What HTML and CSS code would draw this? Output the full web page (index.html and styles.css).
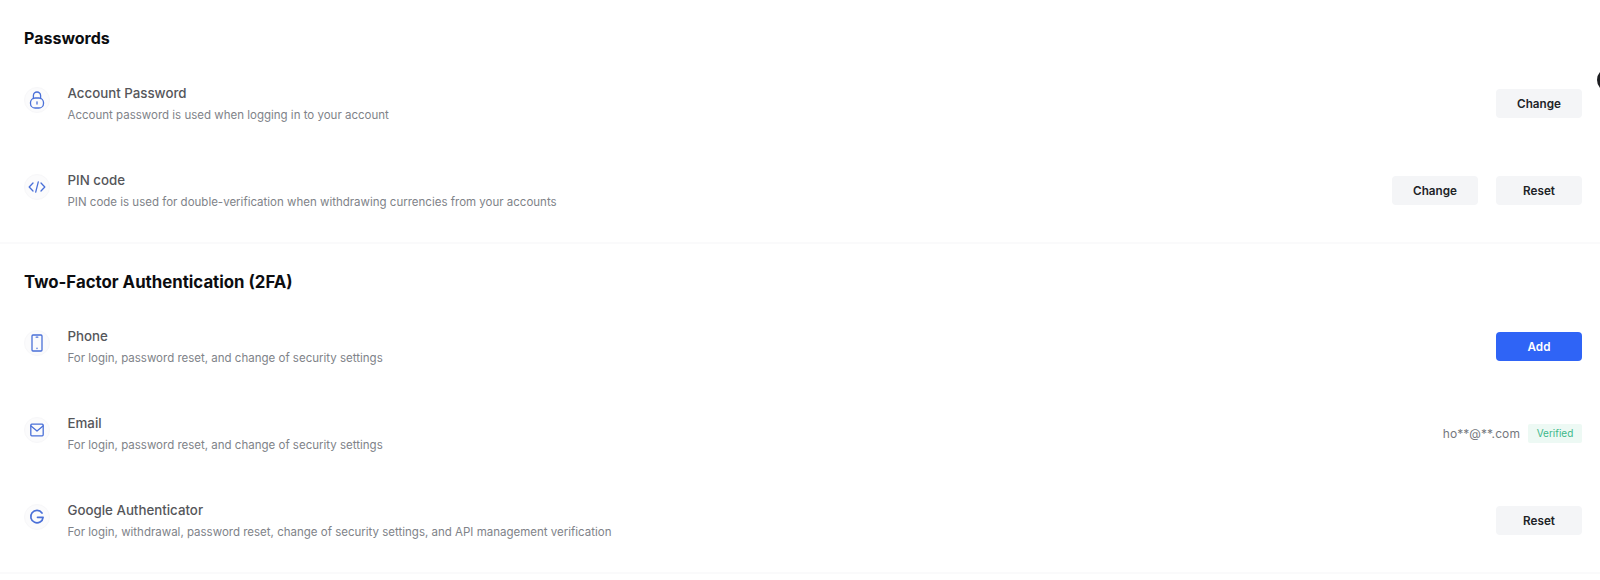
FILE: index.html
```html
<!DOCTYPE html>
<html>
<head>
    <title>Security Settings</title>
    <link rel="stylesheet" href="styles.css">
</head>
<body>
    <div class="edge-dot"></div>

    <div class="section">
        <h2>Passwords</h2>
        <div class="row">
            <div class="row-icon">
                <svg width="20" height="20" viewBox="0 0 20 20"><rect x="3.500" y="8" width="13" height="10" rx="4.600"/><path d="M6.400 8.600V5.600a3.600 3.600 0 0 1 7.200 0v3"/><path d="M10 11.800v2.200"/></svg>
            </div>
            <div class="row-text">
                <div class="row-title">Account Password</div>
                <div class="row-desc">Account password is used when logging in to your account</div>
            </div>
            <div class="row-actions">
                <button>Change</button>
            </div>
        </div>
        <div class="row">
            <div class="row-icon">
                <svg width="20" height="20" viewBox="0 0 20 20"><path d="M6 6 2.200 10 6 14"/><path d="M14 6l3.800 4-3.800 4"/><path d="M11.300 4.800 8.700 15.200"/></svg>
            </div>
            <div class="row-text">
                <div class="row-title">PIN code</div>
                <div class="row-desc">PIN code is used for double-verification when withdrawing currencies from your accounts</div>
            </div>
            <div class="row-actions">
                <button>Change</button>
                <button>Reset</button>
            </div>
        </div>
    </div>

    <div class="section">
        <h2>Two-Factor Authentication (2FA)</h2>
        <div class="row">
            <div class="row-icon">
                <svg width="20" height="20" viewBox="0 0 20 20"><rect x="5" y="2" width="10" height="16" rx="1"/><path d="M9.200 4.200h1.600"/><path d="M10 15.200v.4"/></svg>
            </div>
            <div class="row-text">
                <div class="row-title">Phone</div>
                <div class="row-desc">For login, password reset, and change of security settings</div>
            </div>
            <div class="row-actions">
                <button class="primary">Add</button>
            </div>
        </div>
        <div class="row">
            <div class="row-icon">
                <svg width="20" height="20" viewBox="0 0 20 20"><rect x="3.800" y="4.200" width="12.400" height="11.600" rx="1"/><path d="M4 6l6 5 6-5"/></svg>
            </div>
            <div class="row-text">
                <div class="row-title">Email</div>
                <div class="row-desc">For login, password reset, and change of security settings</div>
            </div>
            <div class="row-actions">
                <span class="masked">ho**@**.com</span>
                <span class="badge">Verified</span>
            </div>
        </div>
        <div class="row">
            <div class="row-icon">
                <svg class="icon-g" width="20" height="20" viewBox="0 0 20 20"><path d="M15 6a6.200 6.200 0 1 0 1.100 4.300H10.500"/></svg>
            </div>
            <div class="row-text">
                <div class="row-title">Google Authenticator</div>
                <div class="row-desc">For login, withdrawal, password reset, change of security settings, and API management verification</div>
            </div>
            <div class="row-actions">
                <button>Reset</button>
            </div>
        </div>
    </div>
</body>
</html>
```

FILE: styles.css
```css
* {
    margin: 0;
    padding: 0;
    box-sizing: border-box;
}

html, body {
    height: 100%;
    overflow: hidden;
}

body {
    font-family: Inter, "Liberation Sans", sans-serif;
    background-color: #fff;
    position: relative;
}

.section {
    padding: 26px 18px 8px 24px;
    border-bottom: 2px solid #fafafb;
}

h2 {
    font-size: 16px;
    font-weight: 700;
    line-height: 24px;
    color: #0c0d10;
    margin-bottom: 10px;
}

.section + .section {
    padding-top: 26px;
}

.section + .section h2 {
    font-size: 16.800px;
    margin-bottom: 9px;
}

.row {
    display: flex;
    align-items: center;
    height: 87px;
}

.row-icon {
    width: 26px;
    height: 26px;
    border-radius: 50%;
    background-color: #fbfbfc;
    border: 1px solid #f7f7f9;
    display: flex;
    align-items: center;
    justify-content: center;
    margin: -8px 17.500px 0 0;
}

.row-icon svg {
    fill: none;
    stroke: #4a70d8;
    stroke-width: 1.300;
    stroke-linecap: round;
    stroke-linejoin: round;
}

.row-icon .icon-g {
    stroke-width: 1.700;
}

.row-text {
    flex: 1;
    padding-top: 1px;
}

.row-title {
    font-size: 13.300px;
    font-weight: 500;
    line-height: 20px;
    color: #55565a;
    margin-bottom: 2px;
}

.row-desc {
    font-size: 11.500px;
    line-height: 20px;
    color: #808389;
}

.row-actions {
    display: flex;
    align-items: center;
    gap: 18px;
}

button {
    width: 86px;
    height: 29px;
    font-family: inherit;
    font-size: 11.700px;
    font-weight: 600;
    color: #202226;
    background-color: #f4f5f7;
    border: none;
    border-radius: 4px;
    cursor: pointer;
}

button.primary {
    background-color: #2f64f6;
    color: #fff;
}

.masked {
    font-size: 12px;
    letter-spacing: 0.1px;
    color: #75787e;
    margin-right: -10px;
}

.badge {
    width: 54px;
    height: 19px;
    line-height: 19px;
    text-align: center;
    font-size: 10px;
    color: #3db88a;
    background-color: #edf9f4;
    border-radius: 2px;
}

/* floating thing cut off by the window edge */
.edge-dot {
    position: absolute;
    top: 68px;
    left: 1597px;
    width: 24px;
    height: 24px;
    border-radius: 50%;
    background-color: #1c1d20;
}
```
